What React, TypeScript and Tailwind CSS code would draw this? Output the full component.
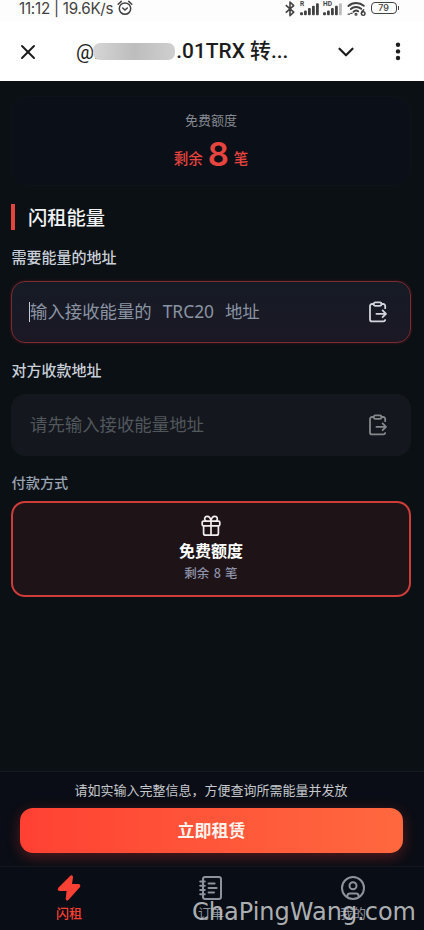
import type { ReactNode } from "react";
import clsx from "clsx";
import { ChevronDown, X } from "lucide-react";

type IconProps = { className?: string };

function AlarmIcon() {
  return (
    <svg
      viewBox="0 0 16 16"
      className="size-4"
      fill="none"
      stroke="currentColor"
      strokeWidth="1.5"
      strokeLinecap="round"
    >
      <circle cx="8" cy="8.6" r="5.7" />
      <path d="M1.2 4.2 4.3 1.4M14.8 4.2l-3.1-2.8M5.7 8l2.3 2.1L10.3 8" />
    </svg>
  );
}

function BluetoothIcon() {
  return (
    <svg
      viewBox="0 0 10 16"
      className="h-4 w-2.5"
      fill="none"
      stroke="currentColor"
      strokeWidth="1.6"
      strokeLinejoin="round"
    >
      <path d="m.8 4.2 7.9 6.9L5 14.7V1l3.7 3.6L.8 11.6" />
    </svg>
  );
}

function SignalIcon({ label, weak }: { label: string; weak?: boolean }) {
  return (
    <svg viewBox="0 0 20 16" className="h-4 w-5" fill="currentColor">
      <text
        x="0"
        y="5.2"
        fontSize="6.6"
        fontWeight="700"
        fontFamily="Roboto, sans-serif"
      >
        {label}
      </text>
      <rect x="0" y="11.3" width="3" height="2.9" rx="1" />
      <rect x="4" y="9.4" width="2.8" height="4.8" rx="1" />
      <rect x="8" y="7" width="2.8" height="7.2" rx="1" />
      <rect x="12" y="4.8" width="2.8" height="9.4" rx="1" />
      <rect
        x="16"
        y="2.2"
        width="2.8"
        height="12"
        rx="1"
        opacity={weak ? 0.35 : 1}
      />
    </svg>
  );
}

function WifiIcon() {
  return (
    <svg
      viewBox="0 0 20 16"
      className="h-4 w-5"
      fill="none"
      stroke="currentColor"
      strokeWidth="1.9"
      strokeLinecap="round"
    >
      <path d="M1.4 5a11.6 11.6 0 0 1 15.4-.2M3.8 8a8 8 0 0 1 10.4-.2M6.4 10.8a3.9 3.9 0 0 1 4.8-.6" />
      <circle cx="9" cy="13.3" r=".6" />
      <path strokeWidth="1.2" d="M1.2 13.2h1.4M3.8 12.4h1.2" />
      <path strokeWidth="1.5" d="M16.6 8.8c-1.4 1-2.2 2.3-2.2 3.6" />
      <circle cx="16.2" cy="12.6" r="1.8" strokeWidth="1.4" />
    </svg>
  );
}

function MoreIcon({ className }: IconProps) {
  return (
    <svg viewBox="0 0 6 20" className={clsx("h-5 w-1.5", className)}>
      <g fill="currentColor">
        <circle cx="3" cy="2.8" r="2.2" />
        <circle cx="3" cy="9.4" r="2.2" />
        <circle cx="3" cy="16" r="2.2" />
      </g>
    </svg>
  );
}

function PasteIcon({ className }: IconProps) {
  return (
    <svg
      viewBox="0 0 20 22"
      className={clsx("h-[22px] w-5 shrink-0", className)}
      fill="none"
      stroke="currentColor"
      strokeWidth="1.8"
      strokeLinecap="round"
      strokeLinejoin="round"
    >
      <path d="M17.2 7.2V5a2 2 0 0 0-2-2h-1.8M5.6 3H4a2 2 0 0 0-2 2v13.4a2 2 0 0 0 2 2h11.4a2 2 0 0 0 1.8-1.4" />
      <rect x="5.8" y="1.4" width="7.6" height="3.4" rx="1.4" />
      <path d="M8.4 12.8h9.2M14.6 9.4l3.4 3.4-3.4 3.4" />
    </svg>
  );
}

function GiftIcon() {
  return (
    <svg
      viewBox="0 0 20 22"
      className="h-[22px] w-5"
      fill="none"
      stroke="currentColor"
      strokeWidth="1.7"
      strokeLinecap="round"
      strokeLinejoin="round"
    >
      <rect x="1.2" y="6.2" width="17.6" height="4.6" rx="1.2" />
      <path d="M2.6 10.8v7.4a2 2 0 0 0 2 2h10.8a2 2 0 0 0 2-2v-7.4M10 6.2v14M10 6.2C9.6 3 8 1.4 6.2 1.4c-2.8 0-3.4 3.2-1.4 4.6M10 6.2c.4-3.2 2-4.8 3.8-4.8 2.8 0 3.4 3.2 1.4 4.6" />
    </svg>
  );
}

function BoltIcon() {
  return (
    <svg
      viewBox="0 0 24 26"
      className="h-[26px] w-6"
      fill="currentColor"
      stroke="currentColor"
      strokeWidth="1.6"
      strokeLinejoin="round"
    >
      <path d="M13.9 1.4 1.9 13.4c-.7.9-.2 1.8.8 1.8h7.8l-1 8.6c0 .9.9 1.2 1.5.5L22.2 11.6c.6-.8.2-1.7-.8-1.7h-7.3l1.1-7.8c0-.9-.7-1.3-1.3-.7z" />
    </svg>
  );
}

function OrdersIcon() {
  return (
    <svg
      viewBox="0 0 24 26"
      className="h-[26px] w-6"
      fill="none"
      stroke="currentColor"
      strokeWidth="2"
      strokeLinecap="round"
    >
      <rect x="4" y="2" width="18" height="22" rx="2.2" />
      <path d="M1.2 6.6h4.6M1.2 10.8h4.6M1.2 15h4.6M1.2 19.2h4.6M9.6 8.6h6M9.6 13h8M9.6 17.4h5.4" />
    </svg>
  );
}

function ProfileIcon() {
  return (
    <svg
      viewBox="0 0 24 26"
      className="h-[26px] w-6"
      fill="none"
      stroke="currentColor"
      strokeWidth="2"
      strokeLinecap="round"
      strokeLinejoin="round"
    >
      <circle cx="12" cy="13" r="11" />
      <circle cx="12" cy="10.8" r="3.5" />
      <path d="M6.4 21.4v-.6a2.6 2.6 0 0 1 2.6-2.4h6a2.6 2.6 0 0 1 2.6 2.4v.6" />
    </svg>
  );
}

function StatusBar() {
  return (
    <div className="flex h-[22px] items-start justify-between pr-[25px] pl-[19px] text-[#424242]">
      <div className="flex items-start font-['Inter'] text-[15.2px] leading-[18px]">
        <span className="w-[98px] tracking-[-0.25px] whitespace-nowrap">
          11:12 | 19.6K/s
        </span>
        <AlarmIcon />
      </div>
      <div className="flex items-start pt-px">
        <BluetoothIcon />
        <span className="ml-[5px]">
          <SignalIcon label="R" />
        </span>
        <span className="ml-[3px]">
          <SignalIcon label="HD" weak />
        </span>
        <span className="ml-[4px]">
          <WifiIcon />
        </span>
        <span className="mt-px ml-1 flex h-3 w-[26px] items-center justify-center rounded-[4px] border-[1.5px] border-current font-['Inter'] text-[9px] font-medium">
          79
        </span>
        <span className="mt-[5px] ml-px h-1 w-[1.5px] bg-current" />
      </div>
    </div>
  );
}

function TitleBar() {
  return (
    <header className="flex h-[59px] items-center bg-white text-[#1c1c1c]">
      <X className="ml-[16px] size-6" strokeWidth={1.9} />
      <div className="ml-[36px] flex h-8 w-[216px] items-center font-['Roboto','Noto_Sans_CJK_SC',sans-serif] text-[20.9px] font-medium whitespace-nowrap">
        <span className="text-[20px] font-normal">@.</span>
        <span className="-ml-1.5 h-[17px] w-[82px] rounded-[7px] bg-gradient-to-r from-[#d6d6d6] via-[#bdbdbd] to-[#cfcfcf] blur-[0.6px]" />
        <span className="ml-px">.01TRX 转...</span>
      </div>
      <ChevronDown className="ml-[41px] size-[26px]" strokeWidth={2} />
      <MoreIcon className="ml-[36px]" />
    </header>
  );
}

function AddressField({
  placeholder,
  active,
}: {
  placeholder: string;
  active?: boolean;
}) {
  return (
    <div
      className={clsx(
        "flex h-[62px] items-center justify-between rounded-[14px] border pr-[22px] pl-[17px]",
        active
          ? "border-[#7c2b33] bg-gradient-to-b from-[#151b25] to-[#1b1824] text-[#8a94a3] shadow-[0_0_3px_rgba(200,40,45,0.35)]"
          : "border-[#13181d] bg-[#14181e] text-[#52575c]"
      )}
    >
      <div className="flex items-center">
        <span className={clsx("h-5 w-px", active && "bg-[#c5c9d0]")} />
        <span className="pb-[2px] font-['Noto_Sans','Noto_Sans_CJK_SC',sans-serif] text-[17.4px] leading-6 [word-spacing:6.4px] whitespace-pre">
          {placeholder}
        </span>
      </div>
      <PasteIcon className={active ? "text-[#d3d5dd]" : "text-[#85888b]"} />
    </div>
  );
}

function NavItem({
  icon,
  label,
  active,
}: {
  icon: ReactNode;
  label: string;
  active?: boolean;
}) {
  return (
    <div
      className={clsx(
        "flex w-[142px] flex-col items-center pt-2 text-[13px] leading-5",
        active ? "font-medium text-[#fb4034]" : "text-[#8e929c]"
      )}
    >
      {icon}
      <span className="mt-[2px]">{label}</span>
    </div>
  );
}

export default function App() {
  return (
    <div className="relative flex h-[930px] w-[424px] flex-col overflow-hidden bg-[#0b1014] font-['Noto_Sans_CJK_SC',sans-serif]">
      <div className="h-[81px] shrink-0 bg-[#fdfdfd]">
        <StatusBar />
        <TitleBar />
      </div>

      <main className="flex h-[690px] shrink-0 flex-col pt-[15px] pr-[13px] pl-[11px]">
        <section className="flex h-[90px] flex-col items-center rounded-2xl border border-[#0e1319] bg-[#0b0f17]">
          <p className="mt-[13px] text-[13px] leading-5 text-[#858991]">
            免费额度
          </p>
          <p className="mt-px flex items-baseline text-[14.5px] leading-[42px] font-medium text-[#e5443f]">
            剩余
            <span className="mx-[5px] translate-y-[2px] font-['Inter'] text-[33px] font-semibold">
              8
            </span>
            笔
          </p>
        </section>

        <h1 className="mt-[18px] flex h-[26px] items-center border-l-[4px] border-[#e2443e] pl-[13px] text-[19.3px] font-medium text-[#f1f3f5]">
          闪租能量
        </h1>

        <label className="mt-4 mb-[13px] pl-[0.5px] text-[15px] leading-[22px] font-medium text-[#c9cfd8]">
          需要能量的地址
        </label>
        <AddressField placeholder="输入接收能量的 TRC20 地址" active />

        <label className="mt-4 mb-[13px] pl-[0.5px] text-[15px] leading-[22px] font-medium text-[#c9cfd8]">
          对方收款地址
        </label>
        <AddressField placeholder="请先输入接收能量地址" />

        <label className="mt-[15px] mb-[8px] pl-[0.5px] text-[14.2px] leading-[22px] font-medium text-[#9aa3b2]">
          付款方式
        </label>
        <section className="flex h-24 flex-col items-center rounded-[14px] border-2 border-[#cf3d38] bg-[#1e1418] pt-[12px]">
          <span className="text-[#f2eeee]">
            <GiftIcon />
          </span>
          <p className="mt-px text-[16px] leading-6 font-bold text-white">
            免费额度
          </p>
          <p className="mt-px text-[12.5px] leading-5 font-medium [word-spacing:1.5px] text-[#8e93a9]">
            剩余 8 笔
          </p>
        </section>
      </main>

      <footer className="flex h-[159px] shrink-0 flex-col bg-[#0a0d15]">
        <div className="flex h-[95px] flex-col border-t border-[#151a22] pt-[8px] pr-[21px] pl-[20px]">
          <p className="-ml-px text-center text-[13px] leading-5 text-[#c5c8cc]">
            请如实输入完整信息，方便查询所需能量并发放
          </p>
          <button className="mt-2 h-[45px] w-full rounded-[13px] bg-gradient-to-r from-[#ff4033] to-[#ff683f] pb-[2px] text-[17px] font-bold text-[#fff3ee] shadow-[0_4px_14px_rgba(255,60,50,0.3)]">
            立即租赁
          </button>
        </div>
        <nav className="-ml-[2px] flex h-16 border-t border-[#12161e] bg-[#090d15]">
          <NavItem icon={<BoltIcon />} label="闪租" active />
          <NavItem icon={<OrdersIcon />} label="订单" />
          <NavItem icon={<ProfileIcon />} label="我的" />
        </nav>
      </footer>

      {/* site mark laid over the bottom bar */}
      <span className="absolute right-[8px] bottom-[2px] font-['DejaVu_Sans'] text-[24px] leading-8 whitespace-nowrap text-[#c3c5c8]/90">
        ChaPingWang.com
      </span>
    </div>
  );
}
